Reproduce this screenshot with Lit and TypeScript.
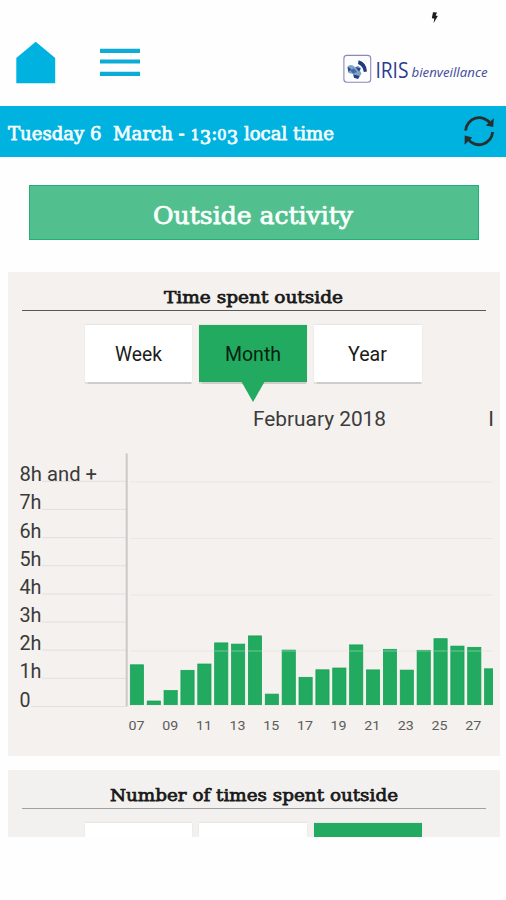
import { LitElement, html, svg, css } from "lit";
import { customElement } from "lit/decorators.js";

/* Text of a fixed width; the baseline lies on the bottom edge of the box. */
const label = (text: unknown, width: number, height: number, cls: string) => html`
  <svg class="label ${cls}" width=${width} height=${height}>
    <text x="0" y=${height} textLength=${width} lengthAdjust="spacingAndGlyphs">${text}</text>
  </svg>`;

const FLOOR = 705;
const PITCH = 16.87;
const TOPS = [
  664.5, 700.7, 690.3, 670, 663.7, 642.6, 643.8, 635.6, 693.8, 649.8, 677,
  669.5, 667.7, 644.6, 669.6, 649, 669.8, 650, 638.4, 645.8, 647, 668.5,
];
const HOURS = ["8h and +", "7h", "6h", "5h", "4h", "3h", "2h", "1h", "0"];

@customElement("activity-chart")
export class ActivityChart extends LitElement {
  static styles = css`
    :host { display: block; height: 314px; }
    svg { display: block; }
    text { font-family: Roboto, sans-serif; }
    .hour { font-size: 20.5px; fill: #3a3a3a; }
    .day { font-size: 13.5px; fill: #5c5c5c; }
    .bar { fill: #22ab60; stroke: #0f9f50; stroke-width: 0.7; }
    .grid { stroke: #e2dfdd; stroke-width: 1; }
    .faint { stroke: #e9e7e4; stroke-width: 1; }
    .over { stroke: #fff; stroke-opacity: 0.25; stroke-width: 1.4; }
    .axis { stroke: #cbc9c8; stroke-width: 2; }
  `;

  render() {
    return html`<svg width="485" height="314" viewBox="8 442 485 314">
      ${HOURS.map((h, i) => {
        const y = 481.3 + i * 28.15;
        const w = i === 0 ? 77.5 : i === 8 ? 11 : 22;
        return svg`
          <line class="grid" x1=${i === 8 ? 31 : 42} x2="126" y1=${y} y2=${y} />
          <text class="hour" x="19.5" y=${y} textLength=${w} lengthAdjust="spacingAndGlyphs">${h}</text>`;
      })}
      ${[482, 538.5, 595, 651].map((y) => svg`<line class="faint" x1="130" x2="493" y1=${y} y2=${y} />`)}
      <line class="axis" x1="126.7" x2="126.7" y1="453.5" y2="706.5" />
      ${TOPS.map((t, i) => svg`<rect class="bar" x=${130.3 + i * PITCH} y=${t + 0.3} width="13.2" height=${FLOOR - t - 0.6} />`)}
      ${TOPS.map((t, i) => t < 651
        ? svg`<line class="over" x1=${130 + i * PITCH} x2=${144 + i * PITCH} y1="651" y2="651" />` : "")}
      ${TOPS.map((_, i) => i % 2 === 0
        ? svg`<text class="day" x=${128.6 + i * 16.83} y="730.3" textLength="16" lengthAdjust="spacingAndGlyphs">${String(i + 7).padStart(2, "0")}</text>` : "")}
    </svg>`;
  }
}

@customElement("app-root")
export class AppRoot extends LitElement {
  static styles = css`
    :host { display: block; height: 900px; overflow: hidden; background: #fefefe; font-family: Roboto, sans-serif; }
    .label { display: block; overflow: visible; flex: none; }
    .slab { font-family: "DejaVu Serif", serif; stroke-width: 0.75; }
    .date { font-size: 18px; fill: #f4fcff; stroke: #f4fcff; }
    .date text { white-space: pre; }
    .small { font-size: 14.5px; }
    .heading { font-size: 24px; fill: #fafffc; stroke: #fafffc; }
    .title { font-size: 17.5px; fill: #181818; stroke: #181818; }
    .tabtext { font-size: 19.5px; fill: #1c1c1c; }
    .tab.on .tabtext { fill: #06210f; }
    .month { font-size: 21px; fill: #3c3c3c; }
    .status { height: 30px; display: flex; justify-content: flex-end; padding-right: 67px; box-sizing: border-box; }
    .status svg { margin-top: 11px; }
    .top { height: 76px; display: flex; align-items: flex-start; padding: 0 18px 0 16px; box-sizing: border-box; }
    .home { margin-top: 11px; }
    .menu { margin: 18px auto 0 44px; }
    .logo { margin-top: 24px; }
    .iris { font-family: "Open Sans", sans-serif; font-size: 22px; fill: #2a3b92; }
    .name { font-family: "Noto Sans", sans-serif; font-style: italic; font-size: 12.6px; fill: #4a52a0; }
    .bar { height: 50.5px; background: #00b2e0; display: flex; justify-content: space-between; padding: 0 10px 0 8px; }
    .bar .date { margin-top: 14px; }
    .bar .sync { margin-top: 8px; }
    .banner { margin: 28.5px 27.5px 32.5px 28.5px; height: 54.5px; box-sizing: border-box; border: 1px solid #22ae79; background: #52bf8f; display: flex; justify-content: center; }
    .banner .label { margin: 17px 0 0 -1px; }
    .card { margin: 0 6px 14px 8px; background: #f4f1ee; overflow: hidden; }
    .first { height: 484px; }
    .second { height: 67px; background: #f3f1ef; }
    .head { margin: 0 14px; height: 39px; box-sizing: border-box; border-bottom: 1.5px solid #5a5856; display: flex; justify-content: center; padding: 11px 1px 0 0; }
    .second .head { border-color: #a3a19f; }
    .tabs { display: flex; gap: 7px; margin: 14px 0 0 76.5px; }
    .tab { width: 107.8px; height: 57px; box-sizing: border-box; background: #fff; display: flex; justify-content: center; padding-top: 17px; box-shadow: 0 1.5px 1px #cfccca, 0 -1px 1px #e8e5e2; position: relative; }
    .tab.on { background: #22ab60; }
    .second .tab { height: 14px; padding: 0; }
    .tip { position: absolute; left: 42px; top: 56px; }
    .months { height: 60px; width: 485px; overflow: hidden; display: flex; padding: 27.5px 0 0 244.5px; box-sizing: border-box; justify-content: space-between; }
  `;

  private tabs(active: string, named: boolean) {
    const widths: Record<string, number> = { Week: 47, Month: 56, Year: 39 };
    return html`<div class="tabs">
      ${Object.keys(widths).map((n) => html`<div class="tab ${n === active ? "on" : ""}">
        ${named ? label(n, widths[n], 19, "tabtext") : ""}
        ${named && n === active
          ? html`<svg class="tip" width="24" height="21"><path d="M0 0H24L12 21Z" fill="#22ab60" /></svg>` : ""}
      </div>`)}
    </div>`;
  }

  render() {
    const date = svg`Tuesday 6\u00a0 March - <tspan class="small">1</tspan><tspan dy="4">3</tspan><tspan dy="-4">:</tspan><tspan class="small">0</tspan><tspan dy="4">3</tspan><tspan dy="-4"> local time</tspan>`;
    return html`
      <div class="status">
        <svg width="8" height="13" viewBox="0 0 8 13"><path d="M2 1.2L6 1.5L4.6 4.4L6.8 5L2.5 12.2L3.3 7.4L.8 7.2Z" fill="#1b1b1b" /></svg>
      </div>
      <div class="top">
        <svg class="home" width="40" height="43"><path d="M.3 17L19.7 .8L39.2 17V42.2H.3Z" fill="#00b2e0" /></svg>
        <svg class="menu" width="40" height="29"><path d="M0 .8H40V5H0ZM0 11.5H40V15.6H0ZM0 23.7H40V28H0Z" fill="#0cabd8" /></svg>
        <svg class="logo" width="145" height="32" viewBox="343 54 145 32">
          <rect x="343.9" y="55.4" width="26.8" height="26.8" rx="3" fill="#fdfdff" stroke="#8b89b5" stroke-width="1.1" />
          <path d="M347.5 66.5Q350 64 353 65.6L355 67.2L358 65.8L361 68L360 71L361.5 73.5L358.5 78.5L354 77.5L353 74L348.5 73Z" fill="#7fa3c6" />
          <path d="M347.5 67L351 69L348.5 72ZM355.5 67L360.5 68.5L359 71.5ZM353.5 74.5L359.5 76L358 79L354 77.8Z" fill="#263e87" />
          <path d="M350 70L354 68.5L357 72L353 73.5Z" fill="#3f6ba4" />
          <path d="M358.6 60.3Q366.6 62.5 367 71.6L363.8 72Q363 65.6 358 63.9Z" fill="#203982" />
          <text class="iris" x="375.4" y="78" textLength="33" lengthAdjust="spacingAndGlyphs">IRIS</text>
          <text class="name" x="411.5" y="77.2" textLength="76" lengthAdjust="spacingAndGlyphs">bienveillance</text>
        </svg>
      </div>
      <div class="bar">
        ${label(date, 326, 20, "slab date")}
        <svg class="sync" width="33" height="34" viewBox="463 114 33 34">
          <g fill="none" stroke="#28302f" stroke-width="2.8">
            <path d="M465.6 130.6A13.6 13.6 0 0 1 490.5 123.8" />
            <path d="M492.6 132A13.6 13.6 0 0 1 467.8 138.8" />
          </g>
          <path d="M493.8 118.2L493.2 127L485.8 125.4ZM464.6 144.8L464.7 135.6L472.3 137.4Z" fill="#28302f" />
        </svg>
      </div>
      <div class="banner">${label("Outside activity", 200, 20.5, "slab heading")}</div>
      <section class="card first">
        <div class="head">${label("Time spent outside", 179, 20, "slab title")}</div>
        ${this.tabs("Month", true)}
        <div class="months">
          ${label("February 2018", 133, 16, "month")}
          <svg class="label month" width="5" height="16"><text x="0.2" y="16">I</text></svg>
        </div>
        <activity-chart></activity-chart>
      </section>
      <section class="card second">
        <div class="head">${label("Number of times spent outside", 288, 20, "slab title")}</div>
        ${this.tabs("Year", false)}
      </section>
    `;
  }
}
